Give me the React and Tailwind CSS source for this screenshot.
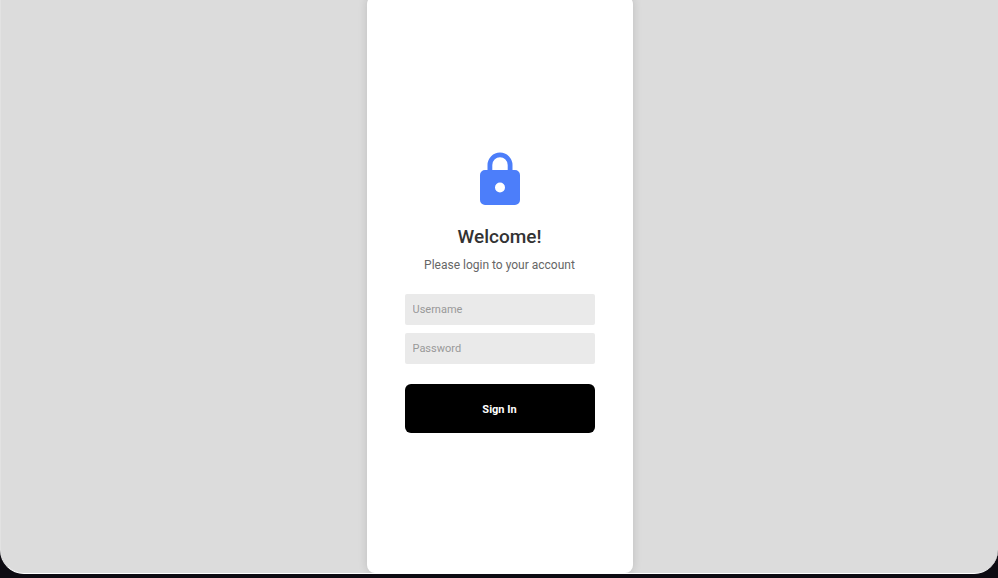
function LockIcon() {
  return (
    <svg viewBox="0 0 40 53" className="h-[53px] w-10" aria-hidden="true">
      <path
        fill="#4c7efa"
        fillRule="evenodd"
        d="M35 18h-2.500v-5a12.500 12.500 0 0 0-25 0v5H5a5 5 0 0 0-5 5v25a5 5 0 0 0 5 5h30a5 5 0 0 0 5-5V23a5 5 0 0 0-5-5ZM12.300 13a7.700 7.700 0 0 1 15.400 0v5H12.300ZM20 40.500a5 5 0 1 1 0-10 5 5 0 0 1 0 10Z"
      />
    </svg>
  );
}

function Field({ id, label, type }) {
  return (
    <input
      id={id}
      type={type}
      aria-label={label}
      placeholder={label}
      className="block h-[31px] w-full rounded-xs bg-[#eaeaea] px-2 text-[11px] text-[#333333] outline-none placeholder:text-[#999999]"
    />
  );
}

export default function App() {
  return (
    <div className="h-screen bg-[#0d0b12] pb-1 font-['Roboto',sans-serif]">
      <main className="flex h-full justify-center overflow-hidden rounded-b-3xl border-b border-l border-b-white border-l-[#e2e2e2] bg-[#dcdcdc]">
        <section className="-mt-1 flex w-[266px] flex-col items-center justify-center rounded-lg bg-white px-[38px] pt-4 shadow-[0_0_10px_rgba(0,0,0,0.14)]">
          <LockIcon />
          <h1 className="mt-5 text-[19px] leading-6 font-medium text-[#333333]">Welcome!</h1>
          <p className="mt-2 text-xs leading-4 whitespace-nowrap text-[#666666]">
            Please login to your account
          </p>
          <form className="mt-[21px] w-full" onSubmit={(event) => event.preventDefault()}>
            <div className="flex flex-col gap-2">
              <Field id="username" label="Username" type="text" />
              <Field id="password" label="Password" type="password" />
            </div>
            <button
              type="submit"
              className="mt-5 h-[49px] w-full rounded-md bg-black pt-0.5 text-[11px] leading-4 font-bold text-white"
            >
              Sign In
            </button>
          </form>
        </section>
      </main>
    </div>
  );
}
